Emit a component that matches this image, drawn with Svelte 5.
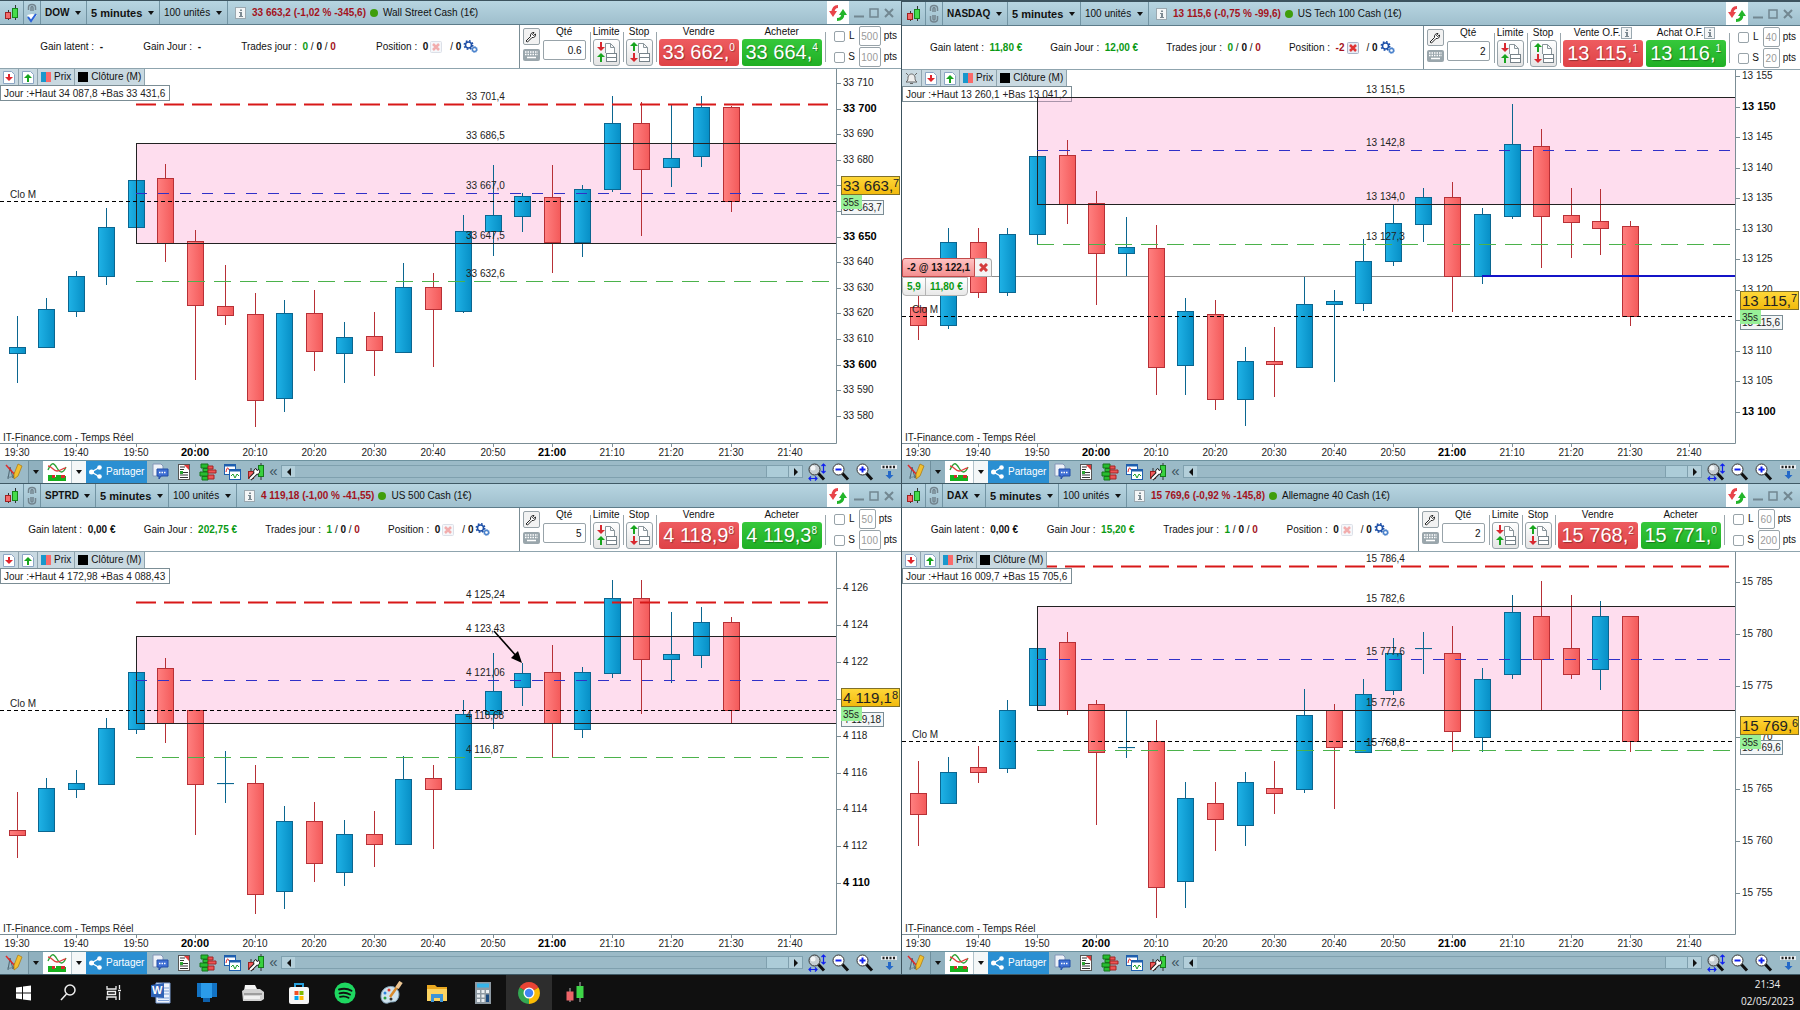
<script>
	// candle: [colour, high, body top, body bottom, low], y values inside the plot
	let charts = $state([
		{
			id: 'dow',
			symbol: 'DOW',
			linked: true,
			quote: '33 663,2 (-1,02 % -345,6)',
			name: 'Wall Street Cash (1€)',
			latent: ['-', ''],
			daily: ['-', ''],
			trades: '0',
			position: '0',
			qty: '0.6',
			sell: ['Vendre', '33 662,', '0'],
			buy: ['Acheter', '33 664,', '4'],
			limit: '500',
			stop: '100',
			range: 'Jour :+Haut 34 087,8 +Bas 33 431,6',
			plot: 374,
			w: 901,
			h: 391,
			axis: { first: 33710, step: -10, count: 14, y: 14, dy: 25.6, bold: 50 },
			band: [74, 174],
			lines: [
				['red', 35, '33 701,4'],
				['black', 74, '33 686,5'],
				['blue', 124, '33 667,0'],
				['black', 174, '33 647,5'],
				['green', 212, '33 632,6']
			],
			close: 132,
			tag: { y: 132, big: '33 663,', sup: '7', small: '33 663,7' },
			candles: [
				['u', 247, 278, 284, 314], ['u', 229, 240, 278, 278], ['u', 202, 207, 242, 248],
				['u', 139, 158, 207, 216], ['u', 111, 111, 158, 158], ['d', 95, 109, 174, 193],
				['d', 161, 172, 236, 311], ['d', 196, 237, 246, 256], ['d', 224, 245, 331, 358],
				['u', 231, 244, 329, 343], ['d', 221, 244, 282, 302], ['u', 253, 268, 284, 314],
				['d', 243, 267, 281, 307], ['u', 194, 218, 283, 283], ['d', 204, 218, 240, 298],
				['u', 146, 162, 242, 244], ['u', 96, 146, 162, 187], ['u', 124, 127, 147, 163],
				['d', 96, 128, 173, 204], ['u', 116, 120, 173, 188], ['u', 27, 54, 120, 123],
				['d', 33, 54, 100, 167], ['u', 35, 89, 98, 118], ['u', 27, 38, 87, 98],
				['d', 37, 38, 132, 143]
			]
		},
		{
			id: 'nasdaq',
			symbol: 'NASDAQ',
			alarm: true,
			quote: '13 115,6 (-0,75 % -99,6)',
			name: 'US Tech 100 Cash (1€)',
			latent: ['11,80 €', 'gain'],
			daily: ['12,00 €', 'gain'],
			trades: '0',
			position: '-2',
			qty: '2',
			sell: ['Vente O.F.', '13 115,', '1'],
			buy: ['Achat O.F.', '13 116,', '1'],
			info: true,
			limit: '40',
			stop: '20',
			range: 'Jour :+Haut 13 260,1 +Bas 13 041,2',
			plot: 373,
			w: 898,
			h: 390,
			axis: { first: 13155, step: -5, count: 12, y: 6, dy: 30.5, bold: 50 },
			band: [27, 134],
			lines: [
				['black', 27, '13 151,5'],
				['blue', 80, '13 142,8'],
				['black', 134, '13 134,0'],
				['green', 174, '13 127,3']
			],
			close: 246,
			entry: 206,
			tag: { y: 246, big: '13 115,', sup: '7', small: '13 115,6' },
			candles: [
				['d', 223, 237, 255, 270], ['u', 158, 172, 255, 259], ['d', 158, 172, 222, 228],
				['u', 158, 164, 222, 226], ['u', 86, 86, 164, 174], ['d', 70, 85, 134, 154],
				['d', 121, 133, 183, 235], ['u', 147, 177, 183, 206], ['d', 155, 178, 297, 325],
				['u', 228, 241, 295, 325], ['d', 230, 244, 329, 340], ['u', 277, 291, 329, 356],
				['d', 257, 291, 294, 327], ['u', 207, 234, 297, 297], ['u', 220, 231, 234, 312],
				['u', 169, 191, 233, 241], ['u', 135, 153, 191, 196], ['u', 118, 127, 154, 172],
				['d', 112, 127, 206, 242], ['u', 138, 144, 206, 214], ['u', 34, 74, 146, 149],
				['d', 59, 76, 146, 198], ['d', 118, 145, 152, 188], ['d', 119, 151, 158, 185],
				['d', 151, 156, 246, 256]
			]
		},
		{
			id: 'sptrd',
			symbol: 'SPTRD',
			quote: '4 119,18 (-1,00 % -41,55)',
			name: 'US 500 Cash (1€)',
			latent: ['0,00 €', 'flat'],
			daily: ['202,75 €', 'gain'],
			trades: '1',
			position: '0',
			qty: '5',
			sell: ['Vendre', '4 118,9', '8'],
			buy: ['Acheter', '4 119,3', '8'],
			limit: '50',
			stop: '100',
			range: 'Jour :+Haut 4 172,98 +Bas 4 088,43',
			plot: 382,
			w: 901,
			h: 399,
			axis: { first: 4126, step: -2, count: 9, y: 36, dy: 36.9, bold: 10 },
			band: [84, 171],
			lines: [
				['red', 50, '4 125,24'],
				['black', 84, '4 123,43'],
				['blue', 128, '4 121,06'],
				['black', 171, '4 118,68'],
				['green', 205, '4 116,87']
			],
			close: 158,
			arrow: true,
			tag: { y: 161, big: '4 119,1', sup: '8', small: '4 119,18' },
			candles: [
				['d', 240, 278, 283, 306], ['u', 226, 236, 279, 279], ['u', 218, 231, 237, 246],
				['u', 166, 176, 232, 232], ['u', 120, 120, 177, 182], ['d', 106, 116, 171, 191],
				['d', 158, 158, 232, 283], ['u', 199, 231, 231, 251], ['d', 213, 231, 342, 362],
				['u', 254, 269, 339, 357], ['d', 250, 269, 311, 330], ['u', 268, 282, 320, 334],
				['d', 259, 282, 292, 315], ['u', 204, 227, 292, 292], ['d', 213, 226, 237, 297],
				['u', 148, 162, 237, 237], ['u', 101, 139, 162, 177], ['u', 111, 121, 135, 154],
				['d', 93, 120, 171, 205], ['u', 115, 120, 177, 186], ['u', 28, 46, 121, 126],
				['d', 28, 46, 107, 162], ['u', 60, 102, 107, 131], ['u', 55, 70, 103, 116],
				['d', 65, 70, 158, 171]
			]
		},
		{
			id: 'dax',
			symbol: 'DAX',
			quote: '15 769,6 (-0,92 % -145,8)',
			name: 'Allemagne 40 Cash (1€)',
			latent: ['0,00 €', 'flat'],
			daily: ['15,20 €', 'gain'],
			trades: '1',
			position: '0',
			qty: '2',
			sell: ['Vendre', '15 768,', '2'],
			buy: ['Acheter', '15 771,', '0'],
			limit: '60',
			stop: '200',
			range: 'Jour :+Haut 16 009,7 +Bas 15 705,6',
			plot: 382,
			w: 898,
			h: 399,
			axis: { first: 15785, step: -5, count: 7, y: 30, dy: 51.8, bold: 50000 },
			band: [54, 158],
			lines: [
				['red', 14, '15 786,4'],
				['black', 54, '15 782,6'],
				['blue', 107, '15 777,6'],
				['black', 158, '15 772,6'],
				['green', 198, '15 768,8']
			],
			close: 189,
			tag: { y: 189, big: '15 769,', sup: '6', small: '15 769,6' },
			candles: [
				['d', 209, 241, 262, 294], ['u', 205, 220, 251, 251], ['d', 194, 215, 220, 231],
				['u', 148, 158, 216, 221], ['u', 96, 96, 153, 153], ['d', 80, 90, 158, 163],
				['d', 148, 152, 200, 273], ['u', 158, 195, 195, 206], ['d', 168, 189, 335, 366],
				['u', 230, 246, 329, 356], ['d', 230, 251, 267, 299], ['u', 220, 230, 273, 294],
				['d', 209, 236, 241, 262], ['u', 137, 163, 237, 241], ['d', 152, 158, 195, 257],
				['u', 127, 142, 200, 200], ['u', 86, 101, 138, 143], ['u', 80, 96, 96, 122],
				['d', 74, 101, 179, 200], ['u', 116, 127, 185, 200], ['u', 43, 60, 122, 127],
				['d', 29, 64, 107, 158], ['d', 43, 96, 122, 127], ['u', 49, 64, 117, 138],
				['d', 64, 64, 189, 200]
			]
		}
	]);

	const times = ['19:30', '19:40', '19:50', '20:00', '20:10', '20:20', '20:30', '20:40', '20:50', '21:00', '21:10', '21:20', '21:30', '21:40'];
	const apps = ['start', 'search', 'taskview', 'word', 'desktop', 'printer', 'store', 'spotify', 'paint', 'folder', 'calc', 'chrome', 'trading'];
	const tools = ['chat', 'news', 'depth', 'windows', 'system'];
	const zooms = ['fit', 'out', 'in', 'collapse'];

	const AXIS_W = 64;
	const AXIS_H = 17;

	const plotW = (c) => c.w - AXIS_W;
	const plotH = (c) => c.h - AXIS_H;
	const x = (c, i) => Math.round((plotW(c) * (16.5 + 29.76 * i)) / 837);
	const y = (c, v) => Math.round((plotH(c) * v) / c.plot);
	const spaced = (n) => String(n).replace(/(\d)(\d{3})$/, '$1 $2');
	const ticks = (c) =>
		Array.from({ length: c.axis.count }, (_, i) => {
			const value = c.axis.first + i * c.axis.step;
			return { value, y: c.axis.y + i * c.axis.dy, bold: value % c.axis.bold === 0 };
		});
</script>

{#snippet candlesIcon()}
	<svg width="16" height="18" viewBox="0 0 16 18">
		<path d="M4.500 6v10M11.500 1v15" stroke="#333" />
		<rect x="1.500" y="8.500" width="5" height="6" fill="#f26b6b" stroke="#a02222" />
		<rect x="8.500" y="4.500" width="5" height="9" fill="#45dc4b" stroke="#17861c" />
	</svg>
{/snippet}

{#snippet link(on)}
	<svg width="12" height="20" viewBox="0 0 12 20" fill="none" stroke="#73848e" stroke-width="1.500">
		<path d="M2.500 7V4.500a3.500 3 0 0 1 7 0V7M5 8V4.500a1 1 0 0 1 2 0V8" />
		{#if on}
			<path d="M1 12l5-1 5 1-5 6z" fill="#fff" stroke="none" />
			<path d="M2 14l3 4 5-7" stroke="#2a62d8" stroke-width="2" />
		{:else}
			<path d="M2.500 12v3a3.500 3 0 0 0 7 0v-3M5 11v4a1 1 0 0 0 2 0v-4" />
		{/if}
	</svg>
{/snippet}

{#snippet infoIcon()}
	<svg width="11" height="12" viewBox="0 0 11 12">
		<rect x=".5" y=".5" width="10" height="11" fill="#f4f6f7" stroke="#9aa8b0" />
		<path d="M5 2.500h2v1.500H5zM4 5h3v4h1v1H4V9h1V6H4z" fill="#7d8a92" />
	</svg>
{/snippet}

{#snippet cross(active)}
	<svg width="12" height="12" viewBox="0 0 12 12" opacity={active ? 1 : 0.4}>
		<rect x=".5" y=".5" width="11" height="11" rx="1" fill="#e8ecf4" stroke="#a9b4c8" />
		<path d="M3 3l6 6M9 3l-6 6" stroke="#e03434" stroke-width="2.500" />
	</svg>
{/snippet}

{#snippet gears()}
	<svg width="15" height="13" viewBox="0 0 15 13" fill="none">
		<circle cx="5.500" cy="5" r="4.200" stroke="#1e50a8" stroke-width="1.600" stroke-dasharray="1.700 1.600" />
		<circle cx="5.500" cy="5" r="3" stroke="#1e50a8" stroke-width="1.500" />
		<circle cx="11.500" cy="9.500" r="2" stroke="#4a82cc" stroke-width="1.300" />
		<circle cx="11.500" cy="9.500" r="3" stroke="#4a82cc" stroke-dasharray="1.100 1.200" />
	</svg>
{/snippet}

{#snippet orderIcon(kind)}
	<svg width="21" height="21" viewBox="0 0 21 21">
		<path d="M9.500 11V1.500h5l4 4V11M14.500 1.500v4h4" fill="#fff" stroke="#8b969c" />
		<rect x="10.500" y="11.500" width="10" height="4" fill="#fff" stroke="#77838a" />
		<rect x="10.500" y="15.500" width="10" height="4" fill="#fff" stroke="#77838a" />
		{#if kind === 'limit'}
			<path d="M4 0h2v5h3L5 9 1 5h3z" fill="#d8282f" />
			<path d="M4 20h2v-5h3l-4-4-4 4h3z" fill="#18a51e" />
		{:else}
			<path d="M4 9h2V4h3L5 0 1 4h3z" fill="#18a51e" />
			<path d="M4 11h2v5h3l-4 4-4-4h3z" fill="#d8282f" />
		{/if}
	</svg>
{/snippet}

{#snippet sheet(dir)}
	<svg width="12" height="13" viewBox="0 0 12 13">
		<path d="M.5.5h8l3 3v9H.5z" fill="#fff" stroke="#8ca6c4" />
		{#if dir === 'down'}
			<path d="M5 3h2v3h3l-4 4-4-4h3z" fill="#e0252c" />
		{:else}
			<path d="M5 11h2V7h3L6 3 2 7h3z" fill="#18a51e" />
		{/if}
	</svg>
{/snippet}

{#snippet toolIcon(kind)}
	<svg width="18" height="18" viewBox="0 0 18 18" fill="none">
		{#if kind === 'pencil'}
			<path d="M3 16L5 4l3 11 2-6" stroke="#4c6470" />
			<path d="M1 2l9 10" stroke="#e02a2a" stroke-width="1.500" />
			<path d="M2 14c4 1 7-1 10-5" stroke="#6b8591" />
			<path d="M13 1l4 2-4 10-4 3 0-5z" fill="#f2c02e" stroke="#a7760e" stroke-width=".7" />
		{:else if kind === 'chat'}
			<path d="M2 1h8l2 2v10H2z" fill="#eef2f8" stroke="#8497b8" />
			<path d="M6 6h11v7h-7l-2 3v-3H6z" fill="#3f6fd4" stroke="#234ea6" />
			<path d="M8 9.500h1.500m1 0H12m1 0h1.500" stroke="#fff" stroke-width="1.500" />
		{:else if kind === 'news'}
			<rect x="3.500" y="1.500" width="11" height="15" fill="#fff" stroke="#555" />
			<path d="M5 4h5M5 6.500h4M5 12h8M5 14.500h8M8 9.500h5" stroke="#333" />
			<path d="M9 2h5v5z" fill="#e23a3a" />
			<path d="M5 8h3v3H5z" fill="#28a52e" />
		{:else if kind === 'depth'}
			<path d="M2 1h7v4H2zM4 5.500h5v3H4zM1 9h8v4H1zM3 13.500h6V17H3z" fill="#28bd30" stroke="#14761a" />
			<path d="M9 3h5v3H9zM9 7h8v3H9zM9 12h6v4H9z" fill="#ee5454" stroke="#a02424" />
		{:else if kind === 'windows'}
			<rect x="1.500" y="1.500" width="11" height="10" fill="#fff" stroke="#1e5fae" />
			<path d="M1 2.500h12" stroke="#1e5fae" stroke-width="2" />
			<path d="M3 9c1-5 2-5 3-2" stroke="#d22" />
			<rect x="6.500" y="6.500" width="11" height="10" fill="#fff" stroke="#1e5fae" />
			<path d="M6 7.500h12" stroke="#1e5fae" stroke-width="2" />
			<path d="M8 13l2-2 2 4 2-4 2 2" stroke="#1d9e2a" />
		{:else if kind === 'system'}
			<path d="M4 5v12M14 0v17" stroke="#333" />
			<rect x="1.500" y="8.500" width="5" height="7" fill="#f05a5a" stroke="#9c2020" />
			<rect x="11.500" y="2.500" width="5" height="11" fill="#38d13e" stroke="#147b1a" />
			<path d="M3 16l6-6" stroke="#222" stroke-width="4" />
			<path d="M12 6.500a3 3 0 1 1-3-1l1 2z" fill="#fff" stroke="#222" />
			<path d="M3 16l6-6" stroke="#fff" stroke-width="2" />
		{/if}
	</svg>
{/snippet}

{#snippet zoomIcon(kind)}
	<svg width="18" height="18" viewBox="0 0 18 18" fill="none">
		{#if kind === 'collapse'}
			<path d="M1 2h16v4H1z" fill="#e8eef2" />
			<path d="M2.500 4h2m1.500 0h2m1.500 0h2m1.500 0h2" stroke="#222" stroke-width="2.500" />
			<path d="M8 8h3v4h2.500l-4 4-4-4H8z" fill="#2468c8" />
		{:else}
			<path d="M10 10l6 6.500" stroke="#111" stroke-width="3" />
			<circle cx="6.500" cy="6.500" r="5.500" fill={kind === 'fit' ? '#c6ced2' : '#fff'} stroke="#333" />
			{#if kind === 'fit'}
				<circle cx="5" cy="5" r="2.500" fill="#f4f6f7" />
				<path d="M15.500 1v9M13.500 3l2-2 2 2M13.500 8l2 2 2-2M1 15.500h8M3 13.500l-2 2 2 2M7 13.500l2 2-2 2" stroke="#1020f0" stroke-width="1.200" />
			{:else}
				<path d="M3.500 6.500h6" stroke="#1020f0" stroke-width="2" />
				{#if kind === 'in'}<path d="M6.500 3.500v6" stroke="#1020f0" stroke-width="2" />{/if}
			{/if}
		{/if}
	</svg>
{/snippet}

{#snippet appIcon(kind)}
	<svg width="24" height="24" viewBox="0 0 24 24" fill="none">
		{#if kind === 'start'}
			<path d="M5 6.500l6-.8v5.800H5zM12 5.500l8-1.100v7.100h-8zM5 12.500h6v5.800l-6-.8zM12 12.500h8v7.100l-8-1.100z" fill="#fff" />
		{:else if kind === 'search'}
			<circle cx="13" cy="9" r="5" stroke="#eee" stroke-width="1.500" />
			<path d="M9.500 13L4 19" stroke="#eee" stroke-width="1.500" />
		{:else if kind === 'taskview'}
			<path d="M4 5v3h9V5M4 19v-3h9v3M4.500 10.500h8v3h-8zM16.500 4v4M16.500 11v8M15 9.500h3" stroke="#eee" stroke-width="1.300" />
		{:else if kind === 'word'}
			<path d="M7 2h14v20H7z" fill="#eef3fb" stroke="#7d9fd6" />
			<path d="M15 7h5M15 10h5M15 13h5M9 17h11M9 19.500h11" stroke="#7d9fd6" />
			<path d="M2 4l13-2v15L2 16z" fill="#2f62b5" />
			<text x="3" y="13" font-size="11" font-weight="700" fill="#fff">W</text>
		{:else if kind === 'desktop'}
			<path d="M2 2h20v14H2z" fill="#1273c4" />
			<path d="M6 2h11v15H6z" fill="#2b9bea" />
			<path d="M8 17h7v4H8z" fill="#0d61ad" />
		{:else if kind === 'printer'}
			<path d="M4 4h10l3 6H3z" fill="#f4f4f4" />
			<path d="M1 10l3-2h15l4 3v7l-3 2H2z" fill="#d2d2d2" />
			<path d="M3 13h18" stroke="#8b8b8b" stroke-width="1.500" />
			<path d="M3 15h16v3H3z" fill="#f0f0f0" />
		{:else if kind === 'store'}
			<path d="M8 7V3h8v4" stroke="#27a0dc" stroke-width="2" />
			<rect x="2" y="6" width="20" height="17" rx="2" fill="#f7f7f7" />
			<path d="M7.500 10h4v4h-4z" fill="#f25022" />
			<path d="M12.500 10h4v4h-4z" fill="#7fba00" />
			<path d="M7.500 15h4v4h-4z" fill="#00a4ef" />
			<path d="M12.500 15h4v4h-4z" fill="#ffb900" />
		{:else if kind === 'spotify'}
			<circle cx="12" cy="12" r="10.500" fill="#1ed760" />
			<path d="M6 8.500c4-1.200 9-.8 12.500 1.200M6.500 12.300c3.500-1 7.500-.6 10.500 1.200M7 15.800c3-.8 6-.5 8.500 1" stroke="#111" stroke-width="1.900" stroke-linecap="round" />
		{:else if kind === 'paint'}
			<path d="M2 15c0-7 7-11 13-9 6 3 6 9 3 13-2 3-6 1-9 3-4 1-7-2-7-7z" fill="#cfe3ee" stroke="#84a4b8" />
			<circle cx="6" cy="12" r="1.500" fill="#2c82dc" />
			<circle cx="10" cy="9" r="1.500" fill="#e03c32" />
			<circle cx="6" cy="17" r="1.500" fill="#28a040" />
			<circle cx="12" cy="18" r="1.500" fill="#333" />
			<path d="M21 2L11 16" stroke="#d88a2c" stroke-width="2.500" />
			<path d="M22 1l-4 6" stroke="#ecc694" stroke-width="4" />
		{:else if kind === 'folder'}
			<path d="M2 4h8l2 2h10v14H2z" fill="#e9a820" />
			<path d="M2 8h20v12H2z" fill="#fcd462" />
			<path d="M6 13h12v8h-3v-4H9v4H6z" fill="#3c94d8" />
		{:else if kind === 'calc'}
			<rect x="4" y="1" width="16" height="22" fill="#8e9aa3" />
			<path d="M6 2.500h12v4H6z" fill="#35b5ea" />
			<path d="M6 9h3v3H6zM10.500 9h3v3h-3zM15 9h3v3h-3zM6 13.500h3v3H6zM10.500 13.500h3v3h-3zM6 18h3v3H6zM10.500 18h3v3h-3z" fill="#e9eef2" />
			<path d="M15 13.500h3V21h-3z" fill="#1b4b80" />
		{:else if kind === 'chrome'}
			<path d="M12 12L2.500 6.500A11 11 0 0 1 21.500 6.500z" fill="#ea4335" />
			<path d="M12 12l9.500-5.500A11 11 0 0 1 12 23z" fill="#fbbc05" />
			<path d="M12 12v11A11 11 0 0 1 2.500 6.500z" fill="#34a853" />
			<circle cx="12" cy="12" r="5.500" fill="#fff" />
			<circle cx="12" cy="12" r="4.200" fill="#4285f4" />
		{:else}
			<path d="M7 7v14M17 1v20" stroke="#bbb" />
			<rect x="3.500" y="10.500" width="7" height="9" fill="#ee6468" />
			<rect x="13.500" y="5" width="7" height="12" fill="#3fd648" />
		{/if}
	</svg>
{/snippet}

{#snippet stat(label, value)}
	<span class="stat">{label} : &nbsp;<b class={value[1]}>{value[0]}</b></span>
{/snippet}

{#snippet protect(chart, letter, amount)}
	<div class="protect">
		<input type="checkbox" id="{chart.id}-{letter}" />
		<label for="{chart.id}-{letter}">{letter}</label>
		<input
			class="pts"
			class:wide={amount.length > 2}
			type="text"
			value={amount}
			aria-label="Distance {letter}"
		/>
		<span>pts</span>
	</div>
{/snippet}

{#snippet picker(label, value, look)}
	<label class="picker {look}">
		<select aria-label={label}><option>{value}</option></select>
	</label>
{/snippet}

<div class="desk">
	<main>
		{#each charts as chart (chart.id)}
			<section class="panel {chart.id}">
				<header>
					<button class="cell kind" aria-label="Type de graphique">{@render candlesIcon()}</button>
					<button class="cell chain" aria-label="Lier">{@render link(chart.linked)}</button>
					{@render picker('Valeur', chart.symbol, 'bold')}
					{@render picker('Période', '5 minutes', 'bold large')}
					{@render picker('Historique', '100 unités', '')}
					<div class="quote">
						{@render infoIcon()}
						<b class="loss">{chart.quote}</b>
						<i class="dot"></i>
						<span>{chart.name}</span>
					</div>
					<button class="refresh" aria-label="Actualiser">
						<svg width="18" height="18" viewBox="0 0 18 18" fill="none">
							<path d="M9 2.500C5.500 2.500 4 5 4 9" stroke="#e8444a" stroke-width="3" />
							<path d="M0 7h8l-4 6z" fill="#e8444a" />
							<path d="M8 15.500c4.500 0 6-2.500 6-6.500" stroke="#22b52a" stroke-width="3" />
							<path d="M10 11h8l-4-6z" fill="#22b52a" />
						</svg>
					</button>
					<div class="window">
						<button aria-label="Réduire"><svg width="10" height="10" viewBox="0 0 10 10"><path d="M0 8.500h10" stroke="#728791" stroke-width="2" /></svg></button>
						<button aria-label="Agrandir"><svg width="10" height="10" viewBox="0 0 10 10"><path d="M1 1h8v8H1z" fill="none" stroke="#728791" stroke-width="1.500" /></svg></button>
						<button aria-label="Fermer"><svg width="10" height="10" viewBox="0 0 10 10"><path d="M1 1l8 8M9 1L1 9" stroke="#728791" stroke-width="2" /></svg></button>
					</div>
				</header>

				<div class="strip">
					<div class="stats">
						{@render stat('Gain latent', chart.latent)}
						{@render stat('Gain Jour', chart.daily)}
						<span class="stat">Trades jour : &nbsp;<b class="gain">{chart.trades}</b> / <b>0</b> / <b class="loss">0</b></span>
						<span class="stat position">
							<span>Position : &nbsp;<b class:loss={chart.position !== '0'}>{chart.position}</b></span>
							{@render cross(chart.position !== '0')}
							<span class="pending">/ <b>0</b></span>
							{@render gears()}
						</span>
					</div>
					<div class="order">
						<div class="side">
							<button class="tiny" aria-label="Réglages">
								<svg width="12" height="12" viewBox="0 0 12 12"><path d="M1 10l4.500-4.500C5 3 7 1 9 1.500L7.500 3.500l1 1L10.500 3C11 5.500 9 7 7 6.500L2.500 11z" fill="#fff" stroke="#222" /></svg>
							</button>
							<button class="keys" aria-label="Clavier">
								<svg width="15" height="10" viewBox="0 0 15 10"><path d="M1 2h13M1 4.500h13" stroke="#fff" stroke-width="1.500" stroke-dasharray="1.500 1" /><path d="M3 7.500h9" stroke="#fff" stroke-width="1.500" /></svg>
							</button>
						</div>
						<label class="col qty">Qté<input type="text" value={chart.qty} /></label>
						<div class="col rule"><span>Limite</span><button class="place" aria-label="Limite">{@render orderIcon('limit')}</button></div>
						<div class="col rule"><span>Stop</span><button class="place" aria-label="Stop">{@render orderIcon('stop')}</button></div>
						<div class="col rule deal">
							<span>{chart.sell[0]}{#if chart.info}{@render infoIcon()}{/if}</span>
							<button class="price sell">{chart.sell[1]}<sup>{chart.sell[2]}</sup></button>
						</div>
						<div class="col deal">
							<span>{chart.buy[0]}{#if chart.info}{@render infoIcon()}{/if}</span>
							<button class="price buy">{chart.buy[1]}<sup>{chart.buy[2]}</sup></button>
						</div>
						<div class="guards rule">
							{@render protect(chart, 'L', chart.limit)}
							{@render protect(chart, 'S', chart.stop)}
						</div>
					</div>
				</div>

				<div class="chart" bind:clientWidth={chart.w} bind:clientHeight={chart.h}>
					<svg class="plot" width={chart.w} height={chart.h}>
						<defs>
							<linearGradient id="{chart.id}-u"><stop offset="0" stop-color="#1fb2e6" /><stop offset="1" stop-color="#078fc6" /></linearGradient>
							<linearGradient id="{chart.id}-d"><stop offset="0" stop-color="#ff8080" /><stop offset="1" stop-color="#f35a5a" /></linearGradient>
							<linearGradient id="{chart.id}-gold" x2="0" y2="1"><stop offset="0" stop-color="#ffd83a" /><stop offset="1" stop-color="#f2b90c" /></linearGradient>
						</defs>

						<rect x="0.5" y="16.5" width="169" height="15" fill="#fff" stroke="#7b8d95" />
						<text x="4" y="28">{chart.range}</text>
						<text x="3" y={plotH(chart) - 2}>IT-Finance.com - Temps Réel</text>

						<rect
							x={x(chart, 4)}
							y={y(chart, chart.band[0])}
							width={plotW(chart) - x(chart, 4)}
							height={y(chart, chart.band[1]) - y(chart, chart.band[0])}
							fill="#fca0cf"
							fill-opacity="0.36"
						/>

						{#if chart.entry}
							<path d="M0 {y(chart, chart.entry) + 0.5}H{plotW(chart)}" stroke="#8c8c8c" />
						{/if}

						{#each chart.candles as [dir, high, top, bottom, low], i}
							<path class="wick {dir}" d="M{x(chart, i) + 0.5} {y(chart, high)}V{y(chart, low)}" />
							<rect
								class="body {dir}"
								x={x(chart, i) - 7.5}
								y={y(chart, top) + 0.5}
								width="16"
								height={Math.max(y(chart, bottom) - y(chart, top), 0.1)}
								fill="url(#{chart.id}-{dir})"
							/>
						{/each}

						<path class="line black" d="M{x(chart, 4) + 0.5} {y(chart, chart.band[0])}V{y(chart, chart.band[1])}" />
						{#each chart.lines as [colour, level, label]}
							<path class="line {colour}" d="M{x(chart, 4)} {y(chart, level) + 0.5}H{plotW(chart)}" />
							<text x={x(chart, 15) + 3} y={y(chart, level) - 4}>{label}</text>
						{/each}
						{#if chart.entry}
							<path d="M{x(chart, 19)} {y(chart, chart.entry)}H{plotW(chart)}" stroke="#1414c8" stroke-width="2" />
						{/if}
						<path class="line dotted" d="M0 {y(chart, chart.close) + 0.5}H{plotW(chart)}" />
						<text x="10" y={y(chart, chart.close) - 3}>Clo M</text>

						{#if chart.arrow}
							<g transform="translate({x(chart, 17)} {y(chart, 111)})">
								<path d="M-28 -32L-4 -5" stroke="#000" stroke-width="1.500" />
								<path d="M0 0l-11 -5 7 -7z" />
							</g>
						{/if}

						<!-- axes -->
						<path d="M{plotW(chart) - 0.5} 0V{plotH(chart) + 0.5}H0" fill="none" stroke="#7b8d95" />
						{#each ticks(chart) as tick}
							<path d="M{plotW(chart)} {y(chart, tick.y) + 0.5}h4" stroke="#7b8d95" />
							<text class:major={tick.bold} x={plotW(chart) + 6} y={y(chart, tick.y) + 3}>{spaced(tick.value)}</text>
						{/each}
						{#each times as time, i}
							<path d="M{x(chart, i * 2) + 0.5} {plotH(chart)}v4" stroke="#7b8d95" />
							<text class="time" class:major={time.endsWith(':00')} x={x(chart, i * 2)} y={plotH(chart) + 13}>{time}</text>
						{/each}

						<g transform="translate({plotW(chart) + 4} {y(chart, chart.tag.y)})">
							<rect x="0.5" y="-0.5" width="42" height="14" fill="#f4f6f7" stroke="#7b8d95" />
							<text x="2" y="10">{chart.tag.small}</text>
							<rect y="-6" width="21" height="14" fill="#98f098" />
							<text x="2" y="5">35s</text>
							<rect x="0.5" y="-24.5" width="58" height="18" fill="url(#{chart.id}-gold)" stroke="#80702a" />
							<text class="big" x="2" y="-10">{chart.tag.big}<tspan class="sup" dy="-4">{chart.tag.sup}</tspan></text>
						</g>
					</svg>

					<div class="legend">
						{#if chart.alarm}
							<button aria-label="Alertes">
								<svg width="13" height="13" viewBox="0 0 13 13" fill="#eee" stroke="#666"><path d="M1 10c2-1 2-3 2-5 1-4 6-4 7 0 0 2 0 4 2 5zM5 11.500h3M1 1l2 2M12 1l-2 2" /></svg>
							</button>
						{/if}
						<button aria-label="Vendre">{@render sheet('down')}</button>
						<button aria-label="Acheter">{@render sheet('up')}</button>
						<button><i class="swatch prix"></i>Prix</button>
						<button><i class="swatch"></i>Clôture (M)</button>
					</div>

					{#if chart.entry}
						<div class="trade">
							<div class="open"><b>-2 @ 13 122,1</b><button aria-label="Clôturer"><svg width="9" height="9" viewBox="0 0 9 9"><path d="M1 1l7 7M8 1L1 8" stroke="#d43c3c" stroke-width="3" /></svg></button></div>
							<div class="result"><b>5,9</b><b>11,80 €</b></div>
						</div>
					{/if}
				</div>

				<footer>
					<button class="draw" aria-label="Dessiner">{@render toolIcon('pencil')}</button>
					<button class="more" aria-label="Outils de dessin"></button>
					<button class="indicator" aria-label="Indicateurs">
						<svg width="20" height="20" viewBox="0 0 20 20" fill="none">
							<path d="M1 8c4-9 6-7 9-2s6 6 9-1" stroke="#2aa032" stroke-width="1.300" />
							<path d="M1 4c4 0 5 5 9 5s5-3 9-3" stroke="#e04040" stroke-width="1.300" />
							<path d="M1 13h4v2h4v-2h5v1h5v5H1z" fill="#18b01e" />
							<path d="M5 13h3v3H5zM14 13h4v3h-4z" fill="#d82c2c" />
						</svg>
					</button>
					<button class="more light" aria-label="Liste des indicateurs"></button>
					<button class="share">
						<svg width="13" height="14" viewBox="0 0 13 14"><path d="M11 2L2.500 7l8.500 5" fill="none" stroke="#fff" stroke-width="1.300" /><circle cx="10.500" cy="2.500" r="2.300" fill="#fff" /><circle cx="2.500" cy="7" r="2.500" fill="#fff" /><circle cx="10.500" cy="11.500" r="2.300" fill="#fff" /></svg>
						Partager
					</button>
					<div class="tools">
						{#each tools as tool}
							<button aria-label={tool}>{@render toolIcon(tool)}</button>
						{/each}
					</div>
					<button class="fold" aria-label="Replier">«</button>
					<div class="scroll">
						<button class="left" aria-label="Reculer"></button>
						<div class="track"><i></i></div>
						<button class="right" aria-label="Avancer"></button>
					</div>
					<div class="zooms">
						{#each zooms as zoom}
							<button aria-label={zoom}>{@render zoomIcon(zoom)}</button>
						{/each}
					</div>
				</footer>
			</section>
		{/each}
	</main>

	<nav>
		{#each apps as app}
			<button class:active={app === 'chrome'} aria-label={app}>{@render appIcon(app)}</button>
		{/each}
		<div class="clock"><span>21:34</span><span>02/05/2023</span></div>
	</nav>
</div>

<style>
	:global(body) {
		margin: 0;
		background: #101010;
	}

	.desk {
		height: 100vh;
		min-height: 640px;
		display: flex;
		flex-direction: column;
		font-family: 'Liberation Sans', Arial, sans-serif;
		font-size: 10px;
		line-height: 12px;
		color: #111;
	}

	button,
	input,
	select {
		font: inherit;
		color: inherit;
		margin: 0;
		padding: 0;
		border: 0;
		background: none;
		box-sizing: border-box;
	}

	button {
		display: flex;
		align-items: center;
		justify-content: center;
	}

	svg {
		flex: none;
		display: block;
	}

	.gain {
		color: #0b9a14;
	}

	.loss {
		color: #a3131d;
	}

	main {
		flex: 1;
		min-height: 0;
		display: grid;
		grid-template-columns: 901fr 899fr;
		grid-template-rows: 484fr 491fr;
		background: #3c535e;
	}

	.panel {
		min-width: 0;
		min-height: 0;
		display: flex;
		flex-direction: column;
		box-sizing: border-box;
	}

	.dow {
		padding-top: 1px;
	}

	.nasdaq {
		padding-top: 2px;
	}

	.nasdaq,
	.dax {
		border-left: 1px solid #3c535e;
	}

	header {
		height: 24px;
		flex: none;
		box-sizing: border-box;
		display: flex;
		border-bottom: 1px solid #5d7c8a;
		background: linear-gradient(#b7d5e1, #9fbfcd);
	}

	.cell,
	.picker {
		border-right: 1px solid #7294a3;
	}

	.kind {
		width: 24px;
	}

	.chain {
		width: 17px;
	}

	.picker {
		display: flex;
		align-items: center;
		gap: 5px;
		padding: 0 5px 0 4px;
	}

	.picker select {
		appearance: none;
	}

	.picker::after,
	.more::after {
		content: '';
		border: 3px solid transparent;
		border-top: 4px solid #111;
		border-bottom: 0;
	}

	.bold {
		font-weight: bold;
	}

	.large {
		font-size: 11px;
	}

	.quote {
		flex: 1;
		min-width: 0;
		display: flex;
		align-items: center;
		padding-left: 7px;
		white-space: nowrap;
	}

	.quote b {
		margin: 0 4px 0 6px;
	}

	.dot {
		width: 8px;
		height: 8px;
		margin-right: 5px;
		border-radius: 50%;
		background: #3f9e0c;
	}

	.refresh {
		width: 22px;
		background: #fff;
	}

	.window {
		display: flex;
		gap: 5px;
		padding: 0 7px 0 5px;
	}

	.strip {
		height: 44px;
		flex: none;
		box-sizing: border-box;
		display: flex;
		background: #fff;
		border-bottom: 1px solid #8fa4ae;
	}

	.stats {
		flex: 1;
		min-width: 0;
		display: flex;
		align-items: center;
		justify-content: space-evenly;
		white-space: pre;
	}

	.position {
		display: flex;
		align-items: center;
		gap: 2px;
	}

	.pending {
		padding-left: 6px;
	}

	.order {
		display: flex;
		border-left: 1px solid #7b8d95;
		padding-left: 3px;
	}

	.side {
		display: flex;
		flex-direction: column;
		gap: 4px;
		padding: 3px 3px 0 0;
	}

	.tiny {
		width: 17px;
		height: 17px;
		border: 1px solid #98a3a9;
		border-radius: 2px;
		background: #f2f2f2;
	}

	.keys {
		width: 17px;
		height: 12px;
		border-radius: 2px;
		background: #9aa6ac;
	}

	.col {
		display: flex;
		flex-direction: column;
		align-items: center;
		padding: 1px 3px 0 0;
	}

	.col > span {
		display: flex;
		align-items: center;
		height: 12px;
	}

	.qty {
		gap: 2px;
		padding-right: 4px;
	}

	.qty input {
		width: 43px;
		height: 20px;
		padding: 0 3px;
		text-align: right;
		border: 1px solid #98a3a9;
		border-radius: 2px;
	}

	.rule {
		padding-left: 3px;
		position: relative;
	}

	.rule::before {
		content: '';
		position: absolute;
		left: 0;
		top: 7px;
		bottom: 6px;
		border-left: 1px solid #9aa6ac;
	}

	.place {
		width: 27px;
		height: 27px;
		margin-top: 1px;
		border: 1px solid #98a3a9;
		border-radius: 3px;
		background: linear-gradient(#fff, #e4e4e4);
	}

	.price {
		width: 80px;
		height: 27px;
		margin-top: 1px;
		border-radius: 3px;
		color: #fff;
		font-size: 20px;
		line-height: 27px;
		text-shadow: 1px 1px 1px #00000055;
	}

	.price sup {
		align-self: flex-start;
		font-size: 10px;
		line-height: 18px;
	}

	.sell {
		background: linear-gradient(#ee5c60, #de4246);
	}

	.buy {
		background: linear-gradient(#36c83b, #1faf25);
	}

	.guards {
		display: flex;
		flex-direction: column;
		gap: 1px;
		padding: 1px 4px 0 9px;
	}

	.protect {
		display: flex;
		align-items: center;
		gap: 3px;
	}

	.protect input[type='checkbox'] {
		appearance: none;
		width: 11px;
		height: 11px;
		border: 1px solid #98a3a9;
		border-radius: 2px;
	}

	.protect label {
		width: 8px;
		text-align: center;
	}

	.protect .pts {
		width: 17px;
		height: 20px;
		text-align: center;
		color: #9a9a9a;
		border: 1px solid #98a3a9;
		border-radius: 2px;
	}

	.protect .wide {
		width: 22px;
	}

	.chart {
		flex: 1;
		min-height: 0;
		position: relative;
		overflow: hidden;
		background: #fff;
	}

	.plot {
		position: absolute;
		inset: 0;
	}

	.plot text {
		fill: #222;
		font-size: 10px;
	}

	.plot .time {
		text-anchor: middle;
	}

	.plot .major {
		fill: #000;
		font-size: 11px;
		font-weight: bold;
	}

	.plot .big {
		font-size: 15px;
	}

	.plot .sup {
		font-size: 11px;
	}

	.wick.u,
	.body.u {
		stroke: #0b6690;
	}

	.wick.d,
	.body.d {
		stroke: #b73036;
	}

	.line {
		fill: none;
	}

	.black {
		stroke: #222;
	}

	.red {
		stroke: #d81818;
		stroke-width: 2;
		stroke-dasharray: 20 8;
	}

	.blue {
		stroke: #3030c8;
		stroke-dasharray: 11 11;
	}

	.green {
		stroke: #4bb24b;
		stroke-dasharray: 17 9;
	}

	.dotted {
		stroke: #000;
		stroke-dasharray: 4 3;
	}

	.legend {
		position: absolute;
		top: 0;
		left: 0;
		display: flex;
	}

	.legend button {
		height: 16px;
		padding: 0 3px;
		gap: 3px;
		background: #c9d9e1;
		border-right: 1px solid #8fa4ae;
	}

	.swatch {
		width: 10px;
		height: 10px;
		background: #000;
	}

	.swatch.prix {
		background: linear-gradient(90deg, #1a98cc 50%, #fb6a6a 50%);
	}

	.trade {
		position: absolute;
		top: 188px;
		left: 0;
	}

	.open,
	.result {
		display: flex;
		width: fit-content;
		height: 19px;
		box-sizing: border-box;
		align-items: stretch;
		line-height: 17px;
	}

	.open b {
		padding: 0 4px 0 4px;
		border: 1px solid #c24a4a;
		border-radius: 3px 0 0 0;
		background: linear-gradient(#ffc2c2, #f49090);
	}

	.open button {
		width: 17px;
		border: 1px solid #a9a9a9;
		border-left: 0;
		border-radius: 0 4px 0 0;
		background: #f4f4f4;
	}

	.result {
		border: 1px solid #b4b4b4;
		border-radius: 0 0 4px 4px;
		background: linear-gradient(#fff, #e8e8e8);
		color: #0b9a14;
	}

	.result b {
		padding: 0 4px;
	}

	.result b + b {
		border-left: 1px solid #b4b4b4;
	}

	footer {
		height: 24px;
		flex: none;
		box-sizing: border-box;
		display: flex;
		background: #9bbac7;
		border-top: 1px solid #6d929f;
		border-bottom: 1px solid #3f5a66;
	}

	.draw {
		width: 29px;
		border-right: 1px solid #6f8f9d;
	}

	.more {
		width: 14px;
		background: #8fb0be;
	}

	.indicator {
		width: 28px;
		background: #fff;
	}

	.more.light {
		width: 15px;
		background: #f4f7f8;
		border-left: 1px solid #b4c4cc;
	}

	.share {
		gap: 4px;
		padding: 0 3px;
		color: #fff;
		background: #2a8fd2;
	}

	.tools {
		display: flex;
		gap: 6px;
		padding-left: 4px;
	}

	.fold {
		width: 16px;
		font-size: 15px;
		color: #3c535e;
		padding-bottom: 2px;
	}

	.scroll {
		flex: 1;
		display: flex;
		margin: 4px 5px 5px 0;
		border: 1px solid #7fa0ae;
	}

	.left,
	.right {
		width: 13px;
		background: #b3cfda;
	}

	.left::after {
		content: '';
		border: 4px solid transparent;
		border-right-color: #111;
		border-left: 0;
	}

	.right::after {
		content: '';
		border: 4px solid transparent;
		border-left-color: #111;
		border-right: 0;
	}

	.track {
		flex: 1;
		display: flex;
		justify-content: flex-end;
	}

	.track i {
		width: 21px;
		background: #acccd8;
		border: solid #7fa0ae;
		border-width: 0 1px;
	}

	.zooms {
		display: flex;
		gap: 6px;
		padding-right: 3px;
	}

	nav {
		height: 35px;
		flex: none;
		display: flex;
		background: #101010;
		color: #eee;
	}

	nav button {
		width: 46px;
	}

	.active {
		background: #2d2d2d;
	}

	.clock {
		margin-left: auto;
		padding: 1px 6px 0 0;
		display: flex;
		flex-direction: column;
		align-items: center;
		font-family: 'Open Sans', sans-serif;
		line-height: 17px;
	}
</style>
